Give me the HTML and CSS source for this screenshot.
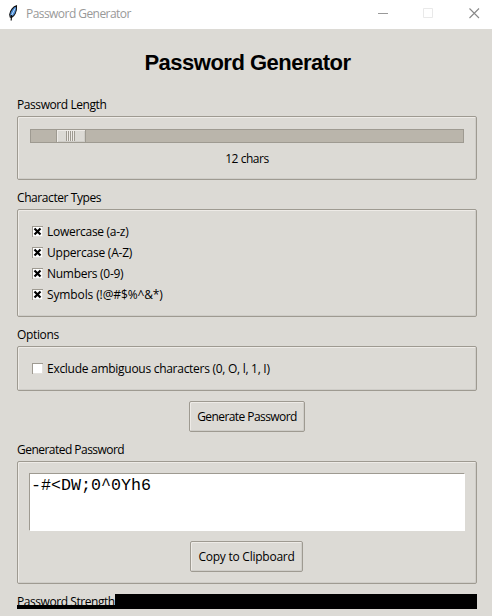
FILE: index.html
```html
<!DOCTYPE html>
<html lang="en">
<head>
<meta charset="utf-8">
<title>Password Generator</title>
<link rel="stylesheet" href="styles.css">
</head>
<body>
<header class="titlebar">
  <svg class="feather" width="11" height="17" viewBox="0 0 11 17"><path d="M8.500.8C5.500 1.500 2.200 5.500 1.700 9.500l.5 2.500 1.300.5C6.500 11 8.900 6.500 8.500.8z" fill="#4b8bd2" stroke="#111" stroke-width="1.100"/><path d="M7 3.500 3.700 10" stroke="#b8dcff" stroke-width="1"/><path d="M3.500 10 3.200 15.500" stroke="#111" stroke-width="1.200"/></svg>
  <span class="caption">Password Generator</span>
  <svg class="controls" width="104" height="12" viewBox="0 0 104 12" fill="none"><path d="M0 5.500h10" stroke="#999"/><path d="M45.500.5h9v9h-9z" stroke="#e9e9e9"/><path d="m91.500.5 9.500 9.500m0-9.500-9.500 9.500" stroke="#888" stroke-width="1.100"/></svg>
</header>
<main>
  <h1>Password Generator</h1>
  <section>
    <h2 class="l1">Password Length</h2>
    <div class="panel length">
      <div class="track"><div class="thumb"><i></i></div></div>
      <p><span>12 chars</span></p>
    </div>
  </section>
  <section>
    <h2 class="l2">Character Types</h2>
    <div class="panel types">
      <div class="check"><svg class="box" viewBox="0 0 11 11"><path d="m2.500 2.500 6 6m0-6-6 6"/></svg><span class="c1">Lowercase (a-z)</span></div>
      <div class="check"><svg class="box" viewBox="0 0 11 11"><path d="m2.500 2.500 6 6m0-6-6 6"/></svg><span class="c2">Uppercase (A-Z)</span></div>
      <div class="check"><svg class="box" viewBox="0 0 11 11"><path d="m2.500 2.500 6 6m0-6-6 6"/></svg><span class="c3">Numbers (0-9)</span></div>
      <div class="check"><svg class="box" viewBox="0 0 11 11"><path d="m2.500 2.500 6 6m0-6-6 6"/></svg><span class="c4">Symbols (!@#$%^&amp;*)</span></div>
    </div>
  </section>
  <section>
    <h2 class="l3">Options</h2>
    <div class="panel options">
      <div class="check"><svg class="box" viewBox="0 0 11 11"></svg><span class="c5">Exclude ambiguous characters (0, O, l, 1, I)</span></div>
    </div>
  </section>
  <button class="generate">Generate Password</button>
  <section>
    <h2 class="l4">Generated Password</h2>
    <div class="panel result">
      <div class="output">-#&lt;DW;0^0Yh6</div>
      <button class="copy">Copy to Clipboard</button>
    </div>
  </section>
  <div class="strength"><h2 class="l5">Password Strength</h2><div class="meter"></div></div>
</main>
</body>
</html>
```
FILE: styles.css
```css
* { box-sizing: border-box; }
body { margin: 0; height: 616px; overflow: hidden; background: #dcdad5; color: #000; font: 12px/16px "Open Sans", "Noto Sans", sans-serif; letter-spacing: -0.35px; }
.titlebar { display: flex; align-items: flex-start; height: 29px; background: #fff; color: #999; padding: 5px 10px 0 8px; }
.caption { margin: 1px 0 0 7px; letter-spacing: -0.55px; }
.controls { margin: 3px 0 0 auto; }
main { display: flex; flex-direction: column; gap: 10px; padding: 0 15px 0 17px; height: 587px; }
h1 { margin: 19px 0 9px; height: 30px; font: bold 22px/30px "Liberation Sans", sans-serif; letter-spacing: -0.5px; text-align: center; padding-left: 1px; }
h2 { margin: 0; height: 19px; font-size: 12px; font-weight: normal; line-height: 16px; white-space: nowrap; }
.l1, .l2 { letter-spacing: -0.42px; }
.l4 { letter-spacing: -0.53px; }
.l5 { letter-spacing: -0.44px; }
.panel { border: 1px solid #9e9a91; border-radius: 2px; box-shadow: inset 1px 1px #eeebe7, inset -1px -1px #cfcdc8; }
.length { height: 64px; padding: 12px; }
.track { height: 14px; background: #bab5ab; border: 1px solid #9e9a91; padding-left: 25px; }
.thumb { width: 30px; height: 14px; margin-top: -1px; background: #dcdad5; border: 1px solid #9e9a91; box-shadow: inset 1px 1px #eeebe7, inset -1px -1px #cfcdc8; padding: 1px 0 0 9px; }
.thumb i { display: block; width: 9px; height: 10px; background: repeating-linear-gradient(90deg, #9e9a91 0 1px, #eeebe7 1px 2px); }
.length p { margin: 8px 0 0; text-align: center; letter-spacing: -0.45px; }
.types { height: 108px; padding: 11px 14px; }
.check { display: flex; align-items: center; gap: 4px; height: 21px; white-space: nowrap; }
.check span { line-height: 16px; letter-spacing: -0.28px; }
.check .c2 { letter-spacing: -0.22px; }
.check .c4 { letter-spacing: -0.12px; }
.box { width: 11px; height: 11px; background: #fff; box-shadow: inset 1px 1px #9e9a91, inset -1px -1px #e2e0dc; stroke: #000; stroke-width: 2.2; fill: none; }
.options { height: 45px; padding: 11px 14px; }
button { display: block; height: 31px; padding: 0; border: 1px solid #9e9a91; border-radius: 2px; background: #dcdad5; box-shadow: inset 1px 1px #eeebe7, inset -1px -1px #cfcdc8; color: #000; font: inherit; white-space: nowrap; }
.generate { width: 116px; margin-left: 172px; flex: none; letter-spacing: -0.57px; }
.result { height: 123px; padding: 11px; }
.output { width: 436px; height: 58px; background: #fff; border: 1px solid; border-color: #9e9a91 #fff #fff #9e9a91; padding: 2px 1px; font: 16.67px/19px "Liberation Mono", monospace; letter-spacing: 0; }
.copy { width: 113px; margin: 10px 0 0 161px; letter-spacing: -0.24px; }
.strength { display: flex; height: 15px; background: #000; }
.strength h2 { width: 98px; height: 11px; overflow: hidden; background: #dcdad5; }
```
